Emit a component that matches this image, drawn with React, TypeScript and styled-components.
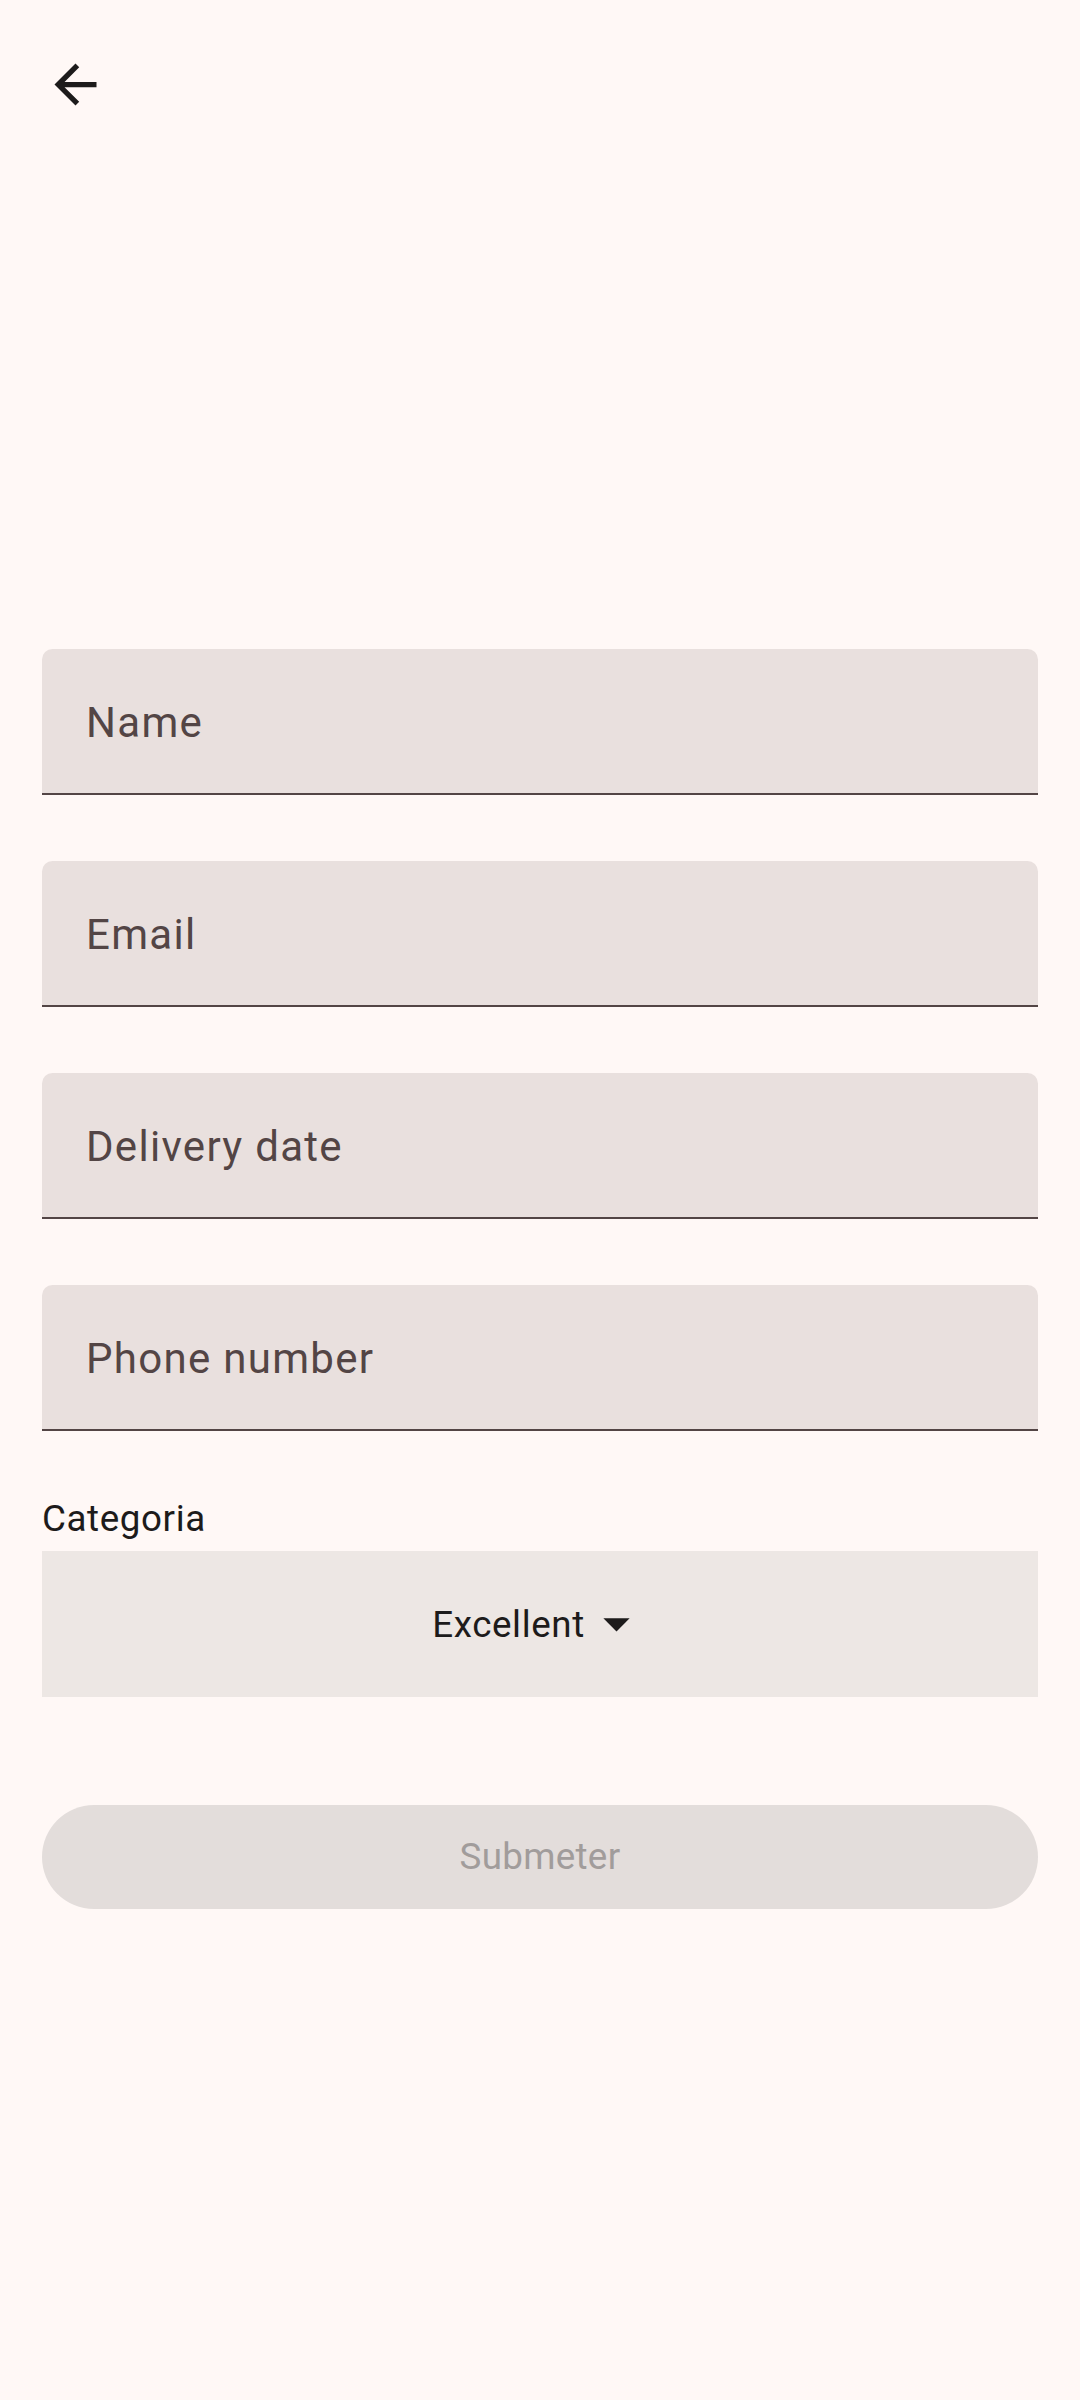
import styled, { createGlobalStyle } from 'styled-components';

const GlobalStyle = createGlobalStyle`
  body {
    margin: 0;
    background: #fff8f6;
    font-family: Roboto, 'Liberation Sans', sans-serif;
  }
`

const Screen = styled.div`
  min-height: 2400px;
  display: flex;
  flex-direction: column;
  background: #fff8f6;
`

const TopBar = styled.div`
  padding: 53px 0 0 44px;
  height: 63px;
`

const BackButton = styled.button`
  width: 63px;
  height: 63px;
  padding: 0;
  border: none;
  background: transparent;
  display: flex;
  align-items: center;
  justify-content: center;
  color: #1d1b1b;
`

const Form = styled.div`
  margin-top: 533px;
  padding: 0 42px;
  display: flex;
  flex-direction: column;
`

const Field = styled.div`
  height: 146px;
  box-sizing: border-box;
  background: #e9e0de;
  border-radius: 10.5px 10.5px 0 0;
  border-bottom: 2px solid #534545;
  padding: 4px 44px 0;
  display: flex;
  align-items: center;
  font-size: 42px;
  line-height: 42px;
  letter-spacing: 1.3px;
  color: #534545;
  & + & {
    margin-top: 66px;
  }
`

const CategoryLabel = styled.div`
  margin-top: 62px;
  font-size: 36.75px;
  line-height: 52.5px;
  letter-spacing: 0.6px;
  color: #1d1b1b;
`

const Dropdown = styled.div`
  margin-top: 5px;
  height: 146px;
  background: #ede7e4;
  display: flex;
  align-items: center;
  justify-content: center;
  font-size: 36.75px;
  letter-spacing: 0.6px;
  color: #1d1b1b;
`

const DropdownValue = styled.span`
  padding-top: 2px;
`

const SubmitButton = styled.button`
  margin-top: 108px;
  height: 104px;
  border: none;
  border-radius: 52px;
  background: #e3dddb;
  color: #a19c9b;
  font-family: Roboto, 'Liberation Sans', sans-serif;
  font-size: 36.75px;
  font-weight: 400;
  letter-spacing: 0.3px;
`

const fields = ['Name', 'Email', 'Delivery date', 'Phone number']

export default function App() {
  return (
    <Screen>
      <GlobalStyle />
      <TopBar>
        <BackButton aria-label='Back'>
          <svg width='63' height='63' viewBox='0 0 24 24' fill='currentColor'>
            <path d='M20 11H7.83l5.59-5.59L12 4l-8 8 8 8 1.41-1.41L7.83 13H20v-2z' />
          </svg>
        </BackButton>
      </TopBar>
      <Form>
        {fields.map((f) => (
          <Field key={f}>{f}</Field>
        ))}
        <CategoryLabel>Categoria</CategoryLabel>
        <Dropdown>
          <DropdownValue>Excellent</DropdownValue>
          <svg width='63' height='63' viewBox='0 0 24 24' fill='currentColor'>
            <path d='M7 10l5 5 5-5z' />
          </svg>
        </Dropdown>
        <SubmitButton disabled>Submeter</SubmitButton>
      </Form>
    </Screen>
  )
}
